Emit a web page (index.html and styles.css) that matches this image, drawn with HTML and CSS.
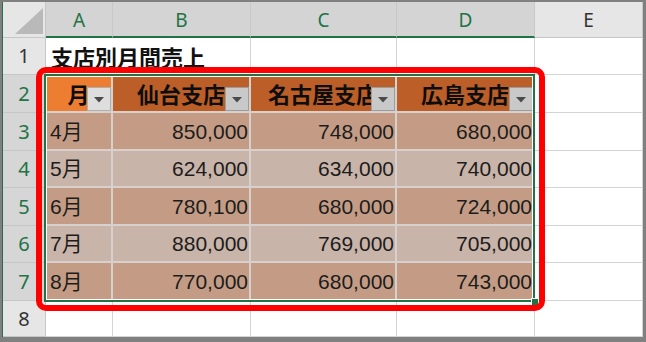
FILE: index.html
```html
<!DOCTYPE html>
<html lang="ja">
<head>
<meta charset="utf-8">
<title>支店別月間売上</title>
<link rel="stylesheet" href="styles.css">
</head>
<body>
<div class="frame">
  <div class="sheet">
    <div class="corner"><svg class="corner-tri" width="28" height="26" viewBox="0 0 28 26"><polygon points="0,26 28,26 28,0" fill="#b9b9b9"/></svg></div>
    <div class="colh sel">A</div>
    <div class="colh sel">B</div>
    <div class="colh sel">C</div>
    <div class="colh sel">D</div>
    <div class="colh">E</div>

    <div class="rowh">1</div>
    <div class="cell title">支店別月間売上</div>
    <div class="cell"></div>
    <div class="cell"></div>
    <div class="cell"></div>
    <div class="cell"></div>

    <div class="rowh sel">2</div>
    <div class="tcell th active">月<span class="fbtn"><svg width="10" height="6" viewBox="0 0 10 6"><polygon points="0,0 10,0 5,5.5" fill="#4a4a4a"/></svg></span></div>
    <div class="tcell th">仙台支店<span class="fbtn"><svg width="10" height="6" viewBox="0 0 10 6"><polygon points="0,0 10,0 5,5.5" fill="#4a4a4a"/></svg></span></div>
    <div class="tcell th">名古屋支店<span class="fbtn"><svg width="10" height="6" viewBox="0 0 10 6"><polygon points="0,0 10,0 5,5.5" fill="#4a4a4a"/></svg></span></div>
    <div class="tcell th">広島支店<span class="fbtn"><svg width="10" height="6" viewBox="0 0 10 6"><polygon points="0,0 10,0 5,5.5" fill="#4a4a4a"/></svg></span></div>
    <div class="cell"></div>

    <div class="rowh sel">3</div>
    <div class="tcell odd m">4月</div>
    <div class="tcell odd n">850,000</div>
    <div class="tcell odd n">748,000</div>
    <div class="tcell odd n">680,000</div>
    <div class="cell"></div>

    <div class="rowh sel">4</div>
    <div class="tcell even m">5月</div>
    <div class="tcell even n">624,000</div>
    <div class="tcell even n">634,000</div>
    <div class="tcell even n">740,000</div>
    <div class="cell"></div>

    <div class="rowh sel">5</div>
    <div class="tcell odd m">6月</div>
    <div class="tcell odd n">780,100</div>
    <div class="tcell odd n">680,000</div>
    <div class="tcell odd n">724,000</div>
    <div class="cell"></div>

    <div class="rowh sel">6</div>
    <div class="tcell even m">7月</div>
    <div class="tcell even n">880,000</div>
    <div class="tcell even n">769,000</div>
    <div class="tcell even n">705,000</div>
    <div class="cell"></div>

    <div class="rowh sel">7</div>
    <div class="tcell odd m">8月</div>
    <div class="tcell odd n">770,000</div>
    <div class="tcell odd n">680,000</div>
    <div class="tcell odd n">743,000</div>
    <div class="cell"></div>

    <div class="rowh">8</div>
    <div class="cell"></div>
    <div class="cell"></div>
    <div class="cell"></div>
    <div class="cell"></div>
    <div class="cell"></div>
  </div>
  <div class="selection"></div>
  <div class="handle"></div>
  <div class="mark"></div>
</div>
</body>
</html>
```

FILE: styles.css
```css
html, body {
  margin: 0;
  padding: 0;
  background: #fff;
}

.frame {
  position: relative;
  width: 646px;
  height: 342px;
  box-sizing: border-box;
  border-style: solid;
  border-color: #808080;
  border-width: 2px 3px 5px 2px;
  background: #fff;
  overflow: hidden;
}

.sheet {
  display: grid;
  grid-template-columns: 43px 67px 138px 146px 138px 108px;
  grid-template-rows: 36px 37px 38px 38px 37px 38px 37px 38px 36px;
  border-left: 1px solid #217346;
  width: 642px;
  box-sizing: border-box;
  font-family: "Liberation Sans", "Noto Sans CJK JP", sans-serif;
}

.sheet > div {
  box-sizing: border-box;
  display: flex;
  align-items: center;
  line-height: 1;
  white-space: nowrap;
  min-width: 0;
}

.corner {
  background: #e6e6e6;
  border-right: 1px solid #c6c6c6;
  border-bottom: 1px solid #c6c6c6;
  position: relative;
}

.corner-tri {
  position: absolute;
  left: 12px;
  top: 6px;
}

.colh {
  justify-content: center;
  background: #e6e6e6;
  border-right: 1px solid #c8c8c8;
  border-bottom: 1px solid #c6c6c6;
  font-family: "Noto Sans", sans-serif;
  font-size: 19px;
  color: #333;
  padding-top: 2px;
}

.colh.sel {
  background: #d4d4d4;
  border-bottom: 2px solid #217346;
  color: #217346;
}

.rowh {
  justify-content: center;
  background: #e6e6e6;
  border-right: 1px solid #c6c6c6;
  border-bottom: 1px solid #c6c6c6;
  font-family: "Noto Sans", sans-serif;
  font-size: 20px;
  color: #333;
}

.rowh.sel {
  background: #d6d6d6;
  color: #217346;
}

.cell {
  border-right: 1px solid #d4d4d4;
  border-bottom: 1px solid #d4d4d4;
}

.title {
  border-right: none;
  overflow: visible;
  padding-left: 5px;
  font-family: "Noto Sans CJK JP", sans-serif;
  font-weight: 700;
  font-size: 22px;
  color: #111;
}

.tcell {
  position: relative;
  border-right: 2px solid #d7d0cc;
  border-bottom: 2px solid #d7d0cc;
  font-size: 21px;
  color: #1c1c1c;
}

.th {
  justify-content: center;
  background: #bb5e27;
  font-family: "Noto Sans CJK JP", sans-serif;
  font-weight: 700;
  font-size: 22px;
  color: #0d0d0d;
}

.th.active {
  background: #ed7d31;
}

.odd {
  background: #c49c85;
}

.even {
  background: #c9b4a9;
}

.m {
  padding-left: 4px;
  font-family: "Liberation Sans", "Noto Sans CJK JP", sans-serif;
}

.n {
  justify-content: flex-end;
  padding-right: 1px;
}

.fbtn {
  position: absolute;
  right: 0;
  bottom: 0;
  width: 24px;
  height: 24px;
  box-sizing: border-box;
  border: 1px solid #9c9c9c;
  background: #c9c9c9;
  display: flex;
  align-items: center;
  justify-content: center;
  padding-top: 2px;
}

.active .fbtn {
  background: #dedede;
  border-color: #aeaeae;
}

.selection {
  position: absolute;
  left: 42px;
  top: 72px;
  width: 491px;
  height: 228px;
  box-sizing: border-box;
  border: 2px solid #217346;
  box-shadow: inset 0 0 0 1px #ffffff;
}

.handle {
  position: absolute;
  left: 529px;
  top: 296px;
  width: 8px;
  height: 8px;
  box-sizing: border-box;
  background: #217346;
  border: 1px solid #ffffff;
}

.mark {
  position: absolute;
  left: 34px;
  top: 65px;
  width: 509px;
  height: 244px;
  box-sizing: border-box;
  border: 6px solid #ff0000;
  border-radius: 10px;
}
```
